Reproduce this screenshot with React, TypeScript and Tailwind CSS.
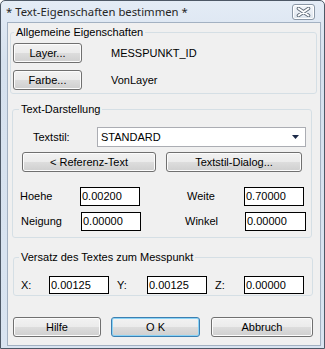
import React from "react";

function Btn({
  children,
  className = "",
  def = false,
}: {
  children: React.ReactNode;
  className?: string;
  def?: boolean;
}) {
  const edge = def
    ? "border-[#3c7fb1] shadow-[inset_0_0_0_1px_#8ad3f6]"
    : "border-[#707070] shadow-[inset_0_0_0_1px_#fcfcfc]";
  return (
    <div
      className={`flex shrink-0 items-center justify-center rounded-[3px] border bg-[linear-gradient(#f2f2f2_0%,#ebebeb_50%,#dddddd_50%,#cfcfcf_100%)] text-[11px] leading-[13px] text-black ${edge} ${className}`}
    >
      {children}
    </div>
  );
}

function Field({ value, className = "" }: { value: string; className?: string }) {
  return (
    <div
      className={`flex shrink-0 items-center border border-black bg-white pl-[1px] text-[11px] leading-[13px] text-black ${className}`}
    >
      {value}
    </div>
  );
}

export default function App() {
  return (
    <div className="flex h-[349px] w-[325px] flex-col overflow-hidden rounded-t-[5px] border border-[#4d5866] bg-[linear-gradient(#e4ecf6,#d6e1ee_60px,#d9e4f1)] font-['Liberation_Sans',Arial,sans-serif]">
      {/* title bar */}
      <div className="flex h-[21px] shrink-0 items-start">
        <div className="mt-[3px] pl-[5px] font-['Noto_Sans',sans-serif] text-[11.3px] leading-[15px] text-[#262626]">
          * Text-Eigenschaften bestimmen *
        </div>
        <div className="ml-auto mr-[9px] mt-[3px] flex h-[16px] w-[23px] items-center justify-center rounded-[3px] border border-[#8a97a6] bg-[linear-gradient(#f3f6fa,#dde5ee)] shadow-[inset_0_0_0_1px_#ffffff]">
          <svg width="15" height="10" viewBox="0 0 15 10">
            <path d="M2.5 1.5 L12.5 8.5 M12.5 1.5 L2.5 8.5" stroke="#5f6b78" strokeWidth="3.6" strokeLinecap="round" />
            <path d="M2.5 1.5 L12.5 8.5 M12.5 1.5 L2.5 8.5" stroke="#ffffff" strokeWidth="1.8" strokeLinecap="round" />
          </svg>
        </div>
      </div>

      {/* client area */}
      <div className="mb-[2px] ml-[6px] mr-[3px] flex flex-1 flex-col items-start border border-[#a3b1c2] bg-[#f0f0f0] text-[11px] leading-[13px] text-black">
        {/* Allgemeine Eigenschaften */}
        <fieldset className="ml-[2px] mt-[3px] w-[307px] rounded-[3px] border border-[#d5dfe5] pb-[3px]">
          <legend className="ml-[3px] px-[2px] text-[11px] leading-[13px]">Allgemeine Eigenschaften</legend>
          <div className="mt-[4px] flex items-center">
            <Btn className="ml-[2px] h-[20px] w-[69px]">Layer...</Btn>
            <span className="ml-[29px]">MESSPUNKT_ID</span>
          </div>
          <div className="mt-[7px] flex items-center">
            <Btn className="ml-[2px] h-[20px] w-[69px]">Farbe...</Btn>
            <span className="ml-[29px]">VonLayer</span>
          </div>
        </fieldset>

        {/* Text-Darstellung */}
        <fieldset className="ml-[4px] mt-[9px] w-[300px] rounded-[3px] border border-[#d5dfe5] pb-[6px]">
          <legend className="ml-[6px] px-[2px] text-[11px] leading-[13px]">Text-Darstellung</legend>
          <div className="mt-[11px] flex items-center">
            <span className="ml-[20px] w-[64px] shrink-0">Textstil:</span>
            <div className="flex h-[20px] w-[209px] shrink-0 items-center border border-[#abadb3] bg-white pl-[3px]">
              <span>STANDARD</span>
              <svg className="ml-auto mr-[6px]" width="7" height="4" viewBox="0 0 7 4">
                <path d="M0 0 L7 0 L3.5 4 Z" fill="#1c2a48" />
              </svg>
            </div>
          </div>
          <div className="mt-[5px] flex items-center">
            <Btn className="ml-[9px] h-[20px] w-[134px]">&lt; Referenz-Text</Btn>
            <Btn className="ml-[10px] h-[20px] w-[136px]">Textstil-Dialog...</Btn>
          </div>
          <div className="mt-[15px] flex items-center">
            <span className="ml-[7px] w-[60px] shrink-0">Hoehe</span>
            <Field value="0.00200" className="h-[19px] w-[60px]" />
            <span className="ml-[47px] w-[57px] shrink-0">Weite</span>
            <Field value="0.70000" className="h-[19px] w-[60px]" />
          </div>
          <div className="mt-[6px] flex items-center">
            <span className="ml-[8px] w-[60px] shrink-0">Neigung</span>
            <Field value="0.00000" className="h-[19px] w-[60px]" />
            <span className="ml-[44px] w-[60px] shrink-0">Winkel</span>
            <Field value="0.00000" className="h-[19px] w-[61px]" />
          </div>
        </fieldset>

        {/* Versatz */}
        <fieldset className="ml-[5px] mt-[13px] w-[300px] rounded-[3px] border border-[#d5dfe5] pb-[1px]">
          <legend className="ml-[5px] px-[2px] text-[11px] leading-[13px]">Versatz des Textes zum Messpunkt</legend>
          <div className="mt-[12px] flex items-center">
            <span className="ml-[7px] w-[28px] shrink-0">X:</span>
            <Field value="0.00125" className="h-[18px] w-[60px]" />
            <span className="ml-[8px] w-[30px] shrink-0">Y:</span>
            <Field value="0.00125" className="h-[18px] w-[60px]" />
            <span className="ml-[8px] w-[29px] shrink-0">Z:</span>
            <Field value="0.00000" className="h-[18px] w-[60px]" />
          </div>
        </fieldset>

        {/* buttons */}
        <div className="mt-[21px] flex items-center">
          <Btn className="ml-[5px] h-[20px] w-[88px]">Hilfe</Btn>
          <Btn def className="ml-[10px] h-[20px] w-[89px]">O K</Btn>
          <Btn className="ml-[11px] h-[20px] w-[102px]">Abbruch</Btn>
        </div>
      </div>
    </div>
  );
}
